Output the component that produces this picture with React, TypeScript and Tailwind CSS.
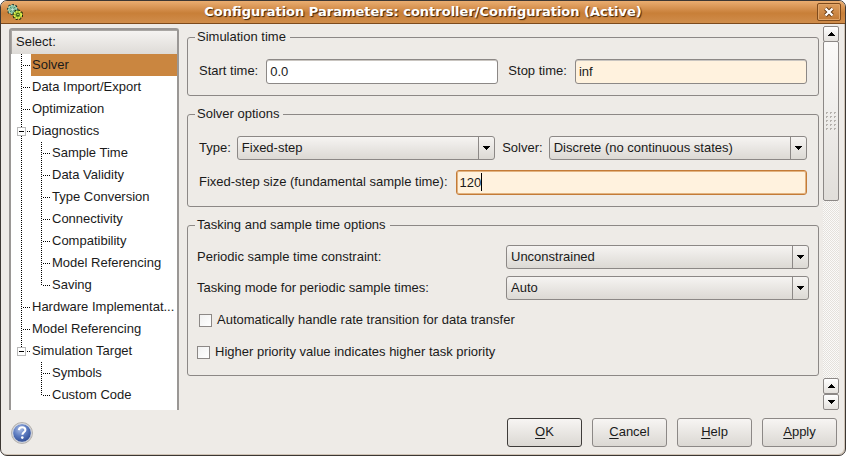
import type { ReactNode } from "react";

type TreeNode = { label: string; children?: string[]; selected?: boolean };

const TREE: TreeNode[] = [
  { label: "Solver", selected: true },
  { label: "Data Import/Export" },
  { label: "Optimization" },
  {
    label: "Diagnostics",
    children: [
      "Sample Time",
      "Data Validity",
      "Type Conversion",
      "Connectivity",
      "Compatibility",
      "Model Referencing",
      "Saving",
    ],
  },
  { label: "Hardware Implementat..." },
  { label: "Model Referencing" },
  { label: "Simulation Target", children: ["Symbols", "Custom Code"] },
];

function VLine({ half, hidden }: { half?: boolean; hidden?: boolean }) {
  const tone = hidden
    ? ""
    : "bg-[repeating-linear-gradient(to_bottom,#000_0_1px,transparent_1px_2px)]";
  return <span className={`w-px shrink-0 ${half ? "h-3" : "h-full"} ${tone}`} />;
}

function HLine() {
  return (
    <span className="mt-[11px] h-px w-[9px] shrink-0 bg-[repeating-linear-gradient(to_right,transparent_0_1px,#000_1px_2px)]" />
  );
}

function Tree() {
  return (
    <ul className="pb-1">
      {TREE.map((node, i) => {
        const last = i === TREE.length - 1;
        return (
          <li key={node.label}>
            <div className="relative flex h-[22px] pl-[10px]">
              <VLine half={last} />
              <HLine />
              {node.children && (
                <button
                  type="button"
                  aria-label={`Collapse ${node.label}`}
                  className="absolute top-[7px] left-[6px] flex size-[9px] items-center justify-center border border-[#b9b9b9] bg-white"
                >
                  <span className="h-px w-[5px] bg-black" />
                </button>
              )}
              <span
                className={`flex-1 truncate pl-px leading-[21px] ${node.selected ? "bg-[#ca8640]" : ""}`}
              >
                {node.label}
              </span>
            </div>
            {node.children && (
              <ul>
                {node.children.map((child, j) => (
                  <li key={child} className="flex h-[22px] pl-[10px]">
                    <VLine hidden={last} />
                    <span className="w-[19px] shrink-0" />
                    <VLine half={j === node.children!.length - 1} />
                    <HLine />
                    <span className="pl-px leading-[21px]">{child}</span>
                  </li>
                ))}
              </ul>
            )}
          </li>
        );
      })}
    </ul>
  );
}

function Group({ title, children }: { title: string; children: ReactNode }) {
  return (
    <fieldset className="min-w-0 rounded-[3px] border border-[#8c8886] pr-[9px] pl-[7px]">
      <legend className="pr-1 pl-0.5 leading-4">{title}</legend>
      {children}
    </fieldset>
  );
}

function Select({ id, value, className }: { id: string; value: string; className: string }) {
  return (
    <div className={`relative h-6 ${className}`}>
      <select
        id={id}
        defaultValue={value}
        className="block h-full w-full appearance-none rounded-[3px] border border-[#8c8886] bg-linear-to-b from-[#f6f4f2] to-[#dcd9d4] pr-6 pb-px pl-1 outline-none"
      >
        <option>{value}</option>
      </select>
      <span className="pointer-events-none absolute inset-y-px right-px flex w-4 items-center justify-center border-l border-[#8c8886]">
        <svg width="7" height="4" viewBox="0 0 7 4" shapeRendering="crispEdges" aria-hidden="true">
          <path d="M0 0h7v1H6v1H5v1H4v1H3V3H2V2H1V1H0z" />
        </svg>
      </span>
    </div>
  );
}

function ScrollButton({ dir, label }: { dir: "up" | "down"; label: string }) {
  return (
    <button
      type="button"
      aria-label={label}
      className="flex h-4 w-full shrink-0 items-center justify-center rounded-[2px] border border-[#8c8886] bg-linear-to-b from-white to-[#e4e1dd]"
    >
      <svg width="7" height="4" viewBox="0 0 7 4" shapeRendering="crispEdges" aria-hidden="true">
        <path
          d={
            dir === "up"
              ? "M3 0h1v1h1v1h1v1h1v1H0V3h1V2h1V1h1z"
              : "M0 0h7v1H6v1H5v1H4v1H3V3H2V2H1V1H0z"
          }
        />
      </svg>
    </button>
  );
}

function ScrollBar() {
  return (
    <div className="flex w-4 shrink-0 flex-col bg-[repeating-conic-gradient(#e4e1dc_0_25%,#fbfaf9_0_50%)] bg-[length:2px_2px]">
      <ScrollButton dir="up" label="Scroll up" />
      <div className="-mt-px flex h-40 items-center justify-center rounded-[2px] border border-[#8c8886] bg-linear-to-b from-[#fbfaf9] to-[#e1deda]">
        <svg width="11" height="18" viewBox="0 0 11 18" shapeRendering="crispEdges" aria-hidden="true">
          {[0, 4, 8, 12, 16].map((y) =>
            [0, 4, 8].map((x) => (
              <path key={`${x}-${y}`} d={`M${x} ${y}h2v1h-1v1h-1z`} fill="#b5b1ad" />
            )),
          )}
        </svg>
      </div>
      <div className="flex-1" />
      <ScrollButton dir="up" label="Scroll up one step" />
      <ScrollButton dir="down" label="Scroll down" />
    </div>
  );
}

function GearIcon() {
  return (
    <svg className="ml-1.5 size-4 shrink-0" viewBox="0 0 16 16" aria-hidden="true">
      <circle cx="5.5" cy="5.5" r="4.6" fill="none" stroke="#17362c" strokeWidth="2.2" strokeDasharray="2 1.4" />
      <circle cx="5.5" cy="5.5" r="4" fill="#7fb99a" stroke="#a4d8ba" strokeWidth="1.6" strokeDasharray="2 0.8" />
      <path d="M3 3l5 5M8 3L3 8" stroke="#4d8a70" />
      <circle cx="5.5" cy="5.5" r="1.3" fill="#c5e8cf" />
      <circle cx="10.8" cy="10.8" r="4.4" fill="none" stroke="#1c2d0a" strokeWidth="2" strokeDasharray="2 1.4" />
      <circle cx="10.8" cy="10.8" r="3.4" fill="#7fa52b" stroke="#d9f04a" strokeWidth="1.8" strokeDasharray="2 0.7" />
      <circle cx="10.8" cy="10.8" r="1.7" fill="#41631d" />
      <path d="M10 10h2v1h-2z" fill="#a9c855" />
    </svg>
  );
}

function HelpIcon() {
  return (
    <svg width="22" height="22" viewBox="0 0 22 22" aria-hidden="true">
      <defs>
        <radialGradient id="orb" cx="40%" cy="30%" r="75%">
          <stop offset="0" stopColor="#a9bce4" />
          <stop offset="0.5" stopColor="#5b7abf" />
          <stop offset="1" stopColor="#2b478d" />
        </radialGradient>
      </defs>
      <circle cx="11" cy="11" r="10.5" fill="#c9c9c9" stroke="#b5b2af" />
      <circle cx="11" cy="11" r="9.3" fill="url(#orb)" stroke="#e5e7ec" strokeWidth="0.8" />
      <path
        d="M7.8 8.2C8 6 9.4 5.2 11.2 5.2c2 0 3.2 1.1 3.2 2.7 0 2.3-3 2.5-3 4.8"
        fill="none"
        stroke="#fff"
        strokeWidth="2"
      />
      <circle cx="11.3" cy="15.6" r="1.3" fill="#fff" />
    </svg>
  );
}

const INPUT =
  "h-[25px] w-full min-w-0 flex-1 rounded-[3px] border border-[#8c8886] px-[3px] pb-px shadow-[inset_0_1px_0_#c9c5c0] outline-none";

const BUTTONS = ["OK", "Cancel", "Help", "Apply"];

export default function App() {
  return (
    <div className="flex min-h-screen flex-col overflow-hidden rounded-[7px] border border-[#3c3733] bg-[#eeebe7] font-['Liberation_Sans',Arial,sans-serif] text-[13px] text-[#1a1a1a] shadow-[inset_-1px_-1px_0_#cfc3b6]">
      <header className="flex h-[23px] items-center border-b border-[#7d4a1c] bg-linear-to-b from-[#eaad70] via-[#c87f38] via-55% to-[#d08d4b]">
        <GearIcon />
        <h1 className="flex-1 pl-1.5 text-center font-['DejaVu_Sans',sans-serif] text-[13px] leading-4 font-bold text-white [text-shadow:1px_1px_1px_#3a2008]">
          Configuration Parameters: controller/Configuration (Active)
        </h1>
        <button
          type="button"
          aria-label="Close"
          className="mr-1 flex h-[18px] w-6 items-center justify-center rounded-[2px] border border-[#7d4a1c] bg-linear-to-b from-[#dc9c5c] to-[#c27a35] shadow-[inset_0_0_0_1px_#e0a468]"
        >
          <svg width="10" height="10" viewBox="0 0 10 10" aria-hidden="true">
            <path d="M1.5 1.5l7 7M8.5 1.5l-7 7" stroke="#5f3510" strokeWidth="4" />
            <path d="M1.5 1.5l7 7M8.5 1.5l-7 7" stroke="#fff" strokeWidth="2.4" />
          </svg>
        </button>
      </header>

      <main className="flex flex-1 pt-0.5 pr-1.5 pl-2">
        <nav aria-label="Select" className="mt-0.5 w-[170px] shrink-0 rounded-t-[3px] border-2 border-b-0 border-[#9a9795] bg-white">
          <div className="h-6 border-t border-l border-[#a9a6a3] bg-linear-to-b from-[#f5f3f1] to-[#dedbd7] pl-1 leading-[22px]">
            Select:
          </div>
          <Tree />
        </nav>

        <form className="mt-[3px] ml-2 flex min-w-0 flex-1 flex-col gap-2.5">
          <Group title="Simulation time">
            <div className="flex items-center pt-3.5 pr-0.5 pb-[11px] pl-1">
              <label htmlFor="start" className="mr-2 shrink-0 pb-0.5">Start time:</label>
              <input id="start" defaultValue="0.0" className={`${INPUT} bg-white`} />
              <label htmlFor="stop" className="mr-2 ml-2.5 shrink-0 pb-0.5">Stop time:</label>
              <input id="stop" defaultValue="inf" className={`${INPUT} bg-[#fff2de]`} />
            </div>
          </Group>

          <Group title="Solver options">
            <div className="flex flex-col gap-2.5 pt-3.5 pr-0.5 pb-[11px] pl-1">
              <div className="flex items-center">
                <label htmlFor="type" className="mr-1.5 shrink-0">Type:</label>
                <Select id="type" value="Fixed-step" className="min-w-0 flex-1" />
                <label htmlFor="solver" className="mr-1.5 ml-[7px] shrink-0">Solver:</label>
                <Select id="solver" value="Discrete (no continuous states)" className="min-w-0 flex-1" />
              </div>
              <div className="flex items-center">
                <label htmlFor="step" className="mr-2 shrink-0 pb-0.5">
                  Fixed-step size (fundamental sample time):
                </label>
                <div className="relative flex min-w-0 flex-1">
                  <input
                    id="step"
                    defaultValue="120"
                    className="h-[25px] w-full rounded-[3px] border border-[#c37b38] bg-[#fff2de] px-[3px] pb-px shadow-[inset_0_0_0_1px_#e2b380] outline-none"
                  />
                  <span className="absolute top-[3px] left-[25px] h-[18px] w-px bg-black" />
                </div>
              </div>
            </div>
          </Group>

          <Group title="Tasking and sample time options">
            <div className="flex flex-col pt-3 pb-[15px] pl-0.5">
              <div className="flex items-center justify-between">
                <label htmlFor="constraint">Periodic sample time constraint:</label>
                <Select id="constraint" value="Unconstrained" className="w-[303px]" />
              </div>
              <div className="mt-[7px] flex items-center justify-between">
                <label htmlFor="mode">Tasking mode for periodic sample times:</label>
                <Select id="mode" value="Auto" className="w-[303px]" />
              </div>
              <label className="mt-3 ml-0.5 flex h-4 items-center gap-[5px]">
                <input type="checkbox" className="size-[13px] appearance-none border border-[#8c8886] bg-linear-to-br from-[#f1f1f1] to-white" />
                Automatically handle rate transition for data transfer
              </label>
              <label className="mt-4 flex h-4 items-center gap-[5px]">
                <input type="checkbox" className="size-[13px] appearance-none border border-[#8c8886] bg-linear-to-br from-[#f1f1f1] to-white" />
                Higher priority value indicates higher task priority
              </label>
            </div>
          </Group>
        </form>

        <div className="ml-1 flex">
          <ScrollBar />
        </div>
      </main>

      <footer className="flex items-center justify-between pt-2 pr-2 pb-2 pl-2.5">
        <button type="button" aria-label="About this pane">
          <HelpIcon />
        </button>
        <div className="flex gap-2.5">
          {BUTTONS.map((name) => (
            <button
              key={name}
              type="button"
              className={`h-[29px] w-[75px] rounded-[3px] border bg-linear-to-b from-[#f7f5f3] to-[#dbd8d3] pb-0.5 ${name === "OK" ? "border-[#3f3c3a]" : "border-[#8c8886]"}`}
            >
              <span className="underline underline-offset-2">{name[0]}</span>
              {name.slice(1)}
            </button>
          ))}
        </div>
      </footer>
    </div>
  );
}
